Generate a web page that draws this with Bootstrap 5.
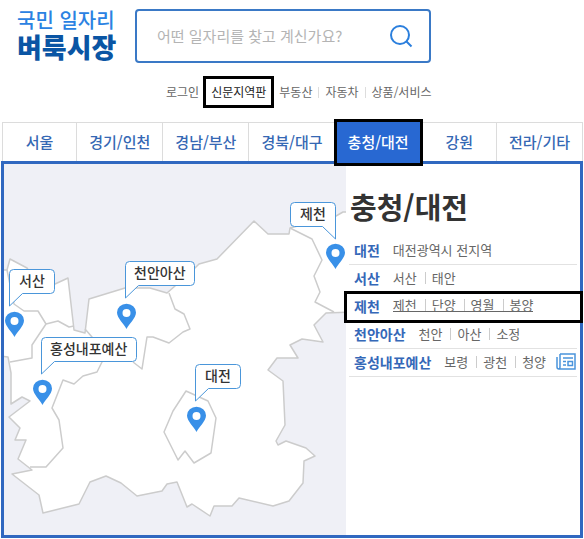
<!DOCTYPE html>
<html lang="ko">
<head>
<meta charset="utf-8">
<meta name="viewport" content="width=device-width, initial-scale=1">
<title>벼룩시장 신문지역판</title>
<link href="https://cdn.jsdelivr.net/npm/bootstrap@5.3.0/dist/css/bootstrap.min.css" rel="stylesheet">
<style>
  body { font-family: "Noto Sans CJK KR", "Noto Sans", sans-serif; color: #333; background: #fff; }
  a { text-decoration: none; }

  .top-row { padding: 9px 16px 0 17px; gap: 20px; }
  .brand { width: 98px; white-space: nowrap; }
  .brand-sub { font-size: 20px; line-height: 21px; font-weight: 500; color: #2b82e2; }
  .brand-main { font-size: 27px; line-height: 34px; font-weight: 900; color: #0a55a4; }
  .search-box { flex: 0 1 296px; height: 54px; border: 2px solid #3a79c6; border-radius: 4px; padding: 0 16px 0 20px; }
  .search-box input { font-size: 15px; line-height: 24px; color: #333; box-shadow: none; }
  .search-box input::placeholder { color: #b4b4b4; opacity: 1; }
  .search-box button { line-height: 0; }

  .quick-links { padding: 12px 0 0 166px; font-size: 12px; line-height: 18px; }
  .quick-links a { color: #666; white-space: nowrap; }
  .quick-links .picked { color: #222; border: 3px solid #000; padding: 4px 5px; margin: 0 5px 0 4px; }
  .bar + .bar { margin-left: 6px; padding-left: 7px; position: relative; }
  .bar + .bar::before { content: ""; position: absolute; left: 0; top: 4px; height: 11px; border-left: 1px solid #ddd; }

  .region-tabs { margin: 14px 1px 0 2px; height: 39px; border: 1px solid #dcdcdc; border-bottom: 0; }
  .region-tabs a { flex: 86 1 0; font-size: 15px; line-height: 38px; font-weight: 500; color: #3568b4; text-align: center; white-space: nowrap; border-left: 1px solid #dcdcdc; }
  .region-tabs a.slim { flex-grow: 74; }
  .region-tabs a:first-child, .region-tabs .current + a { border-left: 0; }
  .region-tabs a.current { flex-grow: 84; margin: -4px 0 -5px -1px; border: 3px solid #000; background: #2868d2; color: #fff; line-height: 40px; z-index: 1; }

  .region-panel { margin: 0 1px; border: 3px solid #3068c0; }
  .map-col { flex: 0 0 59.375%; background: #eff0f6; line-height: 0; }
  .list-col { flex: 1 1 0; min-width: 0; padding: 22px 3px 0 3px; }
  .map-col svg { width: 100%; height: auto; }
  .map-col text { font-size: 14px; font-weight: 500; fill: #333; }
  .region-title { font-size: 29px; line-height: 40px; font-weight: 700; color: #333; margin: 0 0 11px 1px; }
  .town-list li { position: relative; height: 28px; padding: 0 1px 2px 5px; border-bottom: 1px solid #e2e2e2; font-size: 13px; white-space: nowrap; }
  .town-name { font-size: 14px; line-height: 20px; font-weight: 700; color: #3568b8; margin-right: 13px; }
  .town-list a { color: #666; }
  .town { line-height: 12px; }
  .town + .town { margin-left: 8px; padding-left: 6px; border-left: 1px solid #ccc; }
  .town-list .framed::after { content: ""; position: absolute; inset: -2px -6px -3px -5px; border: 3px solid #000; pointer-events: none; z-index: 1; }
  .framed .towns { border-bottom: 1px solid #666; }
</style>
<script src="https://cdn.jsdelivr.net/npm/bootstrap@5.3.0/dist/js/bootstrap.bundle.min.js"></script>
</head>
<body>
<header>
  <div class="top-row d-flex">
    <a href="#" class="brand d-block">
      <span class="brand-sub d-block">국민 일자리</span>
      <span class="brand-main d-block">벼룩시장</span>
    </a>
    <form class="search-box d-flex align-items-center" role="search">
      <input type="text" class="form-control border-0 p-0 bg-transparent" placeholder="어떤 일자리를 찾고 계신가요?" aria-label="일자리 검색">
      <button type="button" class="btn p-0 border-0" aria-label="검색">
        <svg width="24" height="24" viewBox="0 0 24 24" fill="none" stroke="#2b7fdd" stroke-width="2"><circle cx="11" cy="11" r="9"/><path d="M17 17l5.500 5.500"/></svg>
      </button>
    </form>
  </div>
  <nav class="quick-links d-flex align-items-center">
    <a href="#">로그인</a>
    <a href="#" class="picked">신문지역판</a>
    <a href="#" class="bar">부동산</a>
    <a href="#" class="bar">자동차</a>
    <a href="#" class="bar">상품/서비스</a>
  </nav>
</header>
<main>
  <nav class="region-tabs d-flex">
    <a href="#" class="slim">서울</a>
    <a href="#">경기/인천</a>
    <a href="#">경남/부산</a>
    <a href="#">경북/대구</a>
    <a href="#" class="current" aria-current="page">충청/대전</a>
    <a href="#" class="slim">강원</a>
    <a href="#">전라/기타</a>
  </nav>
  <section class="region-panel d-flex">
    <div class="map-col">
      <svg viewBox="4 164 342 371" role="img" aria-label="충청/대전 지도">
        <defs>
          <path id="pin" fill="#3990e8" fill-rule="evenodd" d="M0 25C-2.500 20-9.500 14-9.500 8.500A9.500 8.800 0 0 1 9.500 8.500C9.500 14 2.500 20 0 25ZM0 5a4 4 0 1 0 0 8a4 4 0 1 0 0-8Z"/>
        </defs>
        <g fill="#fff" stroke="#ccc" stroke-width="1.500" stroke-linejoin="round">
          <path d="M0 270H7L10 259L27 268L40 290L55 284L68 278L74 330L85 333L89 299L125 288H150L167 293L175 286L195 268L199 264L217 259L254 221L268 234H289L290 228L336 216L343 212H350V312L326 313L314 325L323 342L302 339L290 345L298 358H277L268 370L283 381L285 425L276 441L278 445L286 441L306 448L315 456L304 461L303 483L289 501L273 506L239 498L232 506H214L210 516L192 504L187 507L177 482L167 484L162 491L137 496L121 483L106 476L90 482L79 504L43 513L39 495L12 474L32 470L18 459L26 440H15L20 428L9 417L30 401L22 397L11 404V373L8 357L0 356Z"/>
          <path fill="none" d="M7 270L14 304L24 311H38L46 324L32 345V358L10 362M46 324L58 321L69 327L74 326M85 329L92 337L102 362L97 372L83 376L74 384L63 380L52 408L59 420L63 448L46 467H30M133 362L142 369L147 337H153L169 343L183 332L190 329L184 314L175 309L169 293M290 228L312 239L322 260L314 276L320 292L315 302L334 312M186 391L208 401L216 418L211 453L194 463L185 451L178 460L164 432L173 411Z"/>
        </g>
        <use href="#pin" x="335.500" y="244"/><use href="#pin" x="14.500" y="312"/><use href="#pin" x="126.500" y="304"/><use href="#pin" x="42.500" y="380"/><use href="#pin" x="196.500" y="407"/>
        <g fill="#fff" stroke="#4a96da" stroke-width="1">
          <a href="#"><path d="M294.500 202.500H331.500Q335.500 202.500 335.500 206.500V239L322.500 226.500H294.500Q290.500 226.500 290.500 222.500V206.500Q290.500 202.500 294.500 202.500Z"/><text x="300" y="219" stroke="none">제천</text></a>
          <a href="#"><path d="M13.500 269.500H50.500Q54.500 269.500 54.500 273.500V289.500Q54.500 293.500 50.500 293.500H22.500L9.500 306V273.500Q9.500 269.500 13.500 269.500Z"/><text x="19" y="286" stroke="none">서산</text></a>
          <a href="#"><path d="M129.500 261.500H190.500Q194.500 261.500 194.500 265.500V281.500Q194.500 285.500 190.500 285.500H138.500L125.500 298V265.500Q125.500 261.500 129.500 261.500Z"/><text x="134" y="278" stroke="none">천안아산</text></a>
          <a href="#"><path d="M45.500 337.500H132.500Q136.500 337.500 136.500 341.500V357.500Q136.500 361.500 132.500 361.500H54.500L41.500 374V341.500Q41.500 337.500 45.500 337.500Z"/><text x="50" y="354" stroke="none">홍성내포예산</text></a>
          <a href="#"><path d="M199.500 364.500H236.500Q240.500 364.500 240.500 368.500V384.500Q240.500 388.500 236.500 388.500H208.500L195.500 401V368.500Q195.500 364.500 199.500 364.500Z"/><text x="205" y="381" stroke="none">대전</text></a>
        </g>
      </svg>
    </div>
    <div class="list-col">
      <h1 class="region-title">충청/대전</h1>
      <ul class="town-list list-unstyled mb-0">
        <li class="d-flex align-items-center"><strong class="town-name">대전</strong><a href="#" class="town">대전광역시 전지역</a></li>
        <li class="d-flex align-items-center"><strong class="town-name">서산</strong><a href="#" class="town">서산</a><a href="#" class="town">태안</a></li>
        <li class="framed d-flex align-items-center"><strong class="town-name">제천</strong><span class="towns d-flex align-items-center"><a href="#" class="town">제천</a><a href="#" class="town">단양</a><a href="#" class="town">영월</a><a href="#" class="town">봉양</a></span></li>
        <li class="d-flex align-items-center"><strong class="town-name">천안아산</strong><a href="#" class="town">천안</a><a href="#" class="town">아산</a><a href="#" class="town">소정</a></li>
        <li class="d-flex align-items-center"><strong class="town-name">홍성내포예산</strong><a href="#" class="town">보령</a><a href="#" class="town">광천</a><a href="#" class="town">청양</a>
          <a href="#" class="ms-auto d-flex" aria-label="신문 보기"><svg width="20" height="17" viewBox="0 0 20 17" fill="none" stroke="#4a94dc" stroke-width="1.500"><path d="M4 1H19V16H3Q1 16 1 14V4M4 1V14Q4 16 2.500 16M7 5H17M7 8.500H10M7 12H10M12 8.500H16.500V12.500H12Z"/></svg></a></li>
      </ul>
    </div>
  </section>
</main>
</body>
</html>
